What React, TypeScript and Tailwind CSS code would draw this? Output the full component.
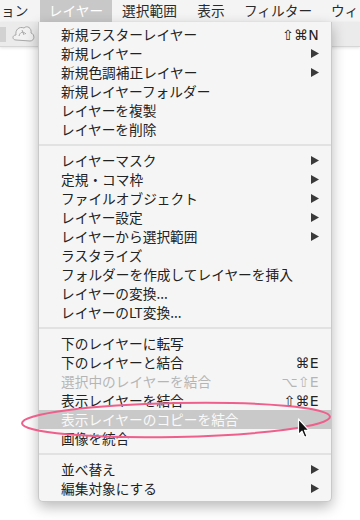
import React from 'react';

type Item = {
  label: string;
  shortcut?: string;
  sub?: boolean;
  disabled?: boolean;
  active?: boolean;
};

const sections: Item[][] = [
  [
    { label: '新規ラスターレイヤー', shortcut: '⇧⌘N' },
    { label: '新規レイヤー', sub: true },
    { label: '新規色調補正レイヤー', sub: true },
    { label: '新規レイヤーフォルダー' },
    { label: 'レイヤーを複製' },
    { label: 'レイヤーを削除' },
  ],
  [
    { label: 'レイヤーマスク', sub: true },
    { label: '定規・コマ枠', sub: true },
    { label: 'ファイルオブジェクト', sub: true },
    { label: 'レイヤー設定', sub: true },
    { label: 'レイヤーから選択範囲', sub: true },
    { label: 'ラスタライズ' },
    { label: 'フォルダーを作成してレイヤーを挿入' },
    { label: 'レイヤーの変換...' },
    { label: 'レイヤーのLT変換...' },
  ],
  [
    { label: '下のレイヤーに転写' },
    { label: '下のレイヤーと結合', shortcut: '⌘E' },
    { label: '選択中のレイヤーを結合', shortcut: '⌥⇧E', disabled: true },
    { label: '表示レイヤーを結合', shortcut: '⇧⌘E' },
    { label: '表示レイヤーのコピーを結合', active: true },
    { label: '画像を統合' },
  ],
  [
    { label: '並べ替え', sub: true },
    { label: '編集対象にする', sub: true },
  ],
];

const jp = "font-['Noto_Sans_CJK_JP',sans-serif]";

const Arrow = () => (
  <svg width="8" height="9" viewBox="0 0 8 9" className="block">
    <polygon points="0,0 8,4.5 0,9" fill="#3a3a3a" />
  </svg>
);

const MenuRow = ({ item }: { item: Item }) => {
  const color = item.active ? 'text-[#fafafa]' : item.disabled ? 'text-[#b5b5b5]' : 'text-[#222]';
  return (
    <div
      className={`flex h-[19px] items-center pl-[22px] pr-[12px] ${item.active ? 'bg-[#c9c9c9]' : ''} ${color}`}
    >
      <span className="flex-1 whitespace-nowrap text-[13.7px] leading-none">{item.label}</span>
      {item.shortcut && (
        <span className="font-['DejaVu_Sans',sans-serif] text-[14px] leading-none tracking-[0.3px]">
          {item.shortcut}
        </span>
      )}
      {item.sub && <Arrow />}
    </div>
  );
};

const Separator = () => (
  <div className="flex h-[12px] items-center">
    <div className="h-[2px] w-full bg-[#e2e2e2]" />
  </div>
);

const Cursor = () => (
  <svg width="14" height="21" viewBox="0 0 14 21" className="absolute left-[297px] top-[418px]">
    <path
      d="M1.5 1 L1.5 16.5 L5 13.2 L7.6 19.2 L10 18.2 L7.5 12.3 L12 12.3 Z"
      fill="#111"
      stroke="#fff"
      strokeWidth="1.2"
      strokeLinejoin="round"
    />
  </svg>
);

export default function App() {
  return (
    <div className={`relative h-[520px] w-[360px] overflow-hidden bg-white ${jp}`}>
      {/* menu bar */}
      <div className="flex h-[22px] items-center bg-[#f4f4f4] text-[13.7px] leading-none text-[#2a2a2a]">
        <div className="w-[40px] pl-[1px]">ョン</div>
        <div className="flex h-full w-[72px] items-center justify-center bg-[#c8c8c8] text-white">レイヤー</div>
        <div className="w-[75px] text-center">選択範囲</div>
        <div className="w-[48px] text-center">表示</div>
        <div className="w-[86px] text-center">フィルター</div>
        <div className="whitespace-nowrap pl-[10px]">ウィ</div>
      </div>

      {/* toolbar strip */}
      <div className="flex h-[25px] items-center gap-[6px] border-b border-[#d6d6d6] bg-[#ebebeb] shadow-[0_1px_3px_rgba(0,0,0,0.12)]">
        <div className="h-[15px] w-[6px] bg-[#d2d2d2]" />
        <svg width="24" height="20" viewBox="0 0 24 20">
          <path
            d="M4 16 C0 16 0 11 4 11 C3 6 7 2 12 4 C15 1 20 4 19 9 C23 10 23 17 18 17 Z M7 12 C8 8 11 7 14 10 M10 6 L12 11"
            fill="#f2f2f2"
            stroke="#a8a8a8"
            strokeWidth="1"
          />
        </svg>
        <span className="font-['DejaVu_Sans',sans-serif] text-[12px] text-[#555]">⇕</span>
      </div>

      {/* dropdown menu */}
      <div className="absolute left-[38px] top-[22px] w-[294px] rounded-b-[5px] border border-t-0 border-[#c9c9c9] bg-[#f5f5f5] pb-[3px] pt-[3px] shadow-[0_5px_14px_rgba(0,0,0,0.28)]">
        {sections.map((sec, i) => (
          <React.Fragment key={i}>
            {i > 0 && <Separator />}
            {sec.map((item) => (
              <MenuRow key={item.label} item={item} />
            ))}
          </React.Fragment>
        ))}
      </div>

      {/* annotation ellipse */}
      <svg width="360" height="520" className="pointer-events-none absolute left-0 top-0">
        <ellipse
          cx="176"
          cy="420"
          rx="154"
          ry="17"
          fill="none"
          stroke="#ef5f8c"
          strokeWidth="2"
          transform="rotate(-1.2 176 420)"
        />
      </svg>

      <Cursor />
    </div>
  );
}
